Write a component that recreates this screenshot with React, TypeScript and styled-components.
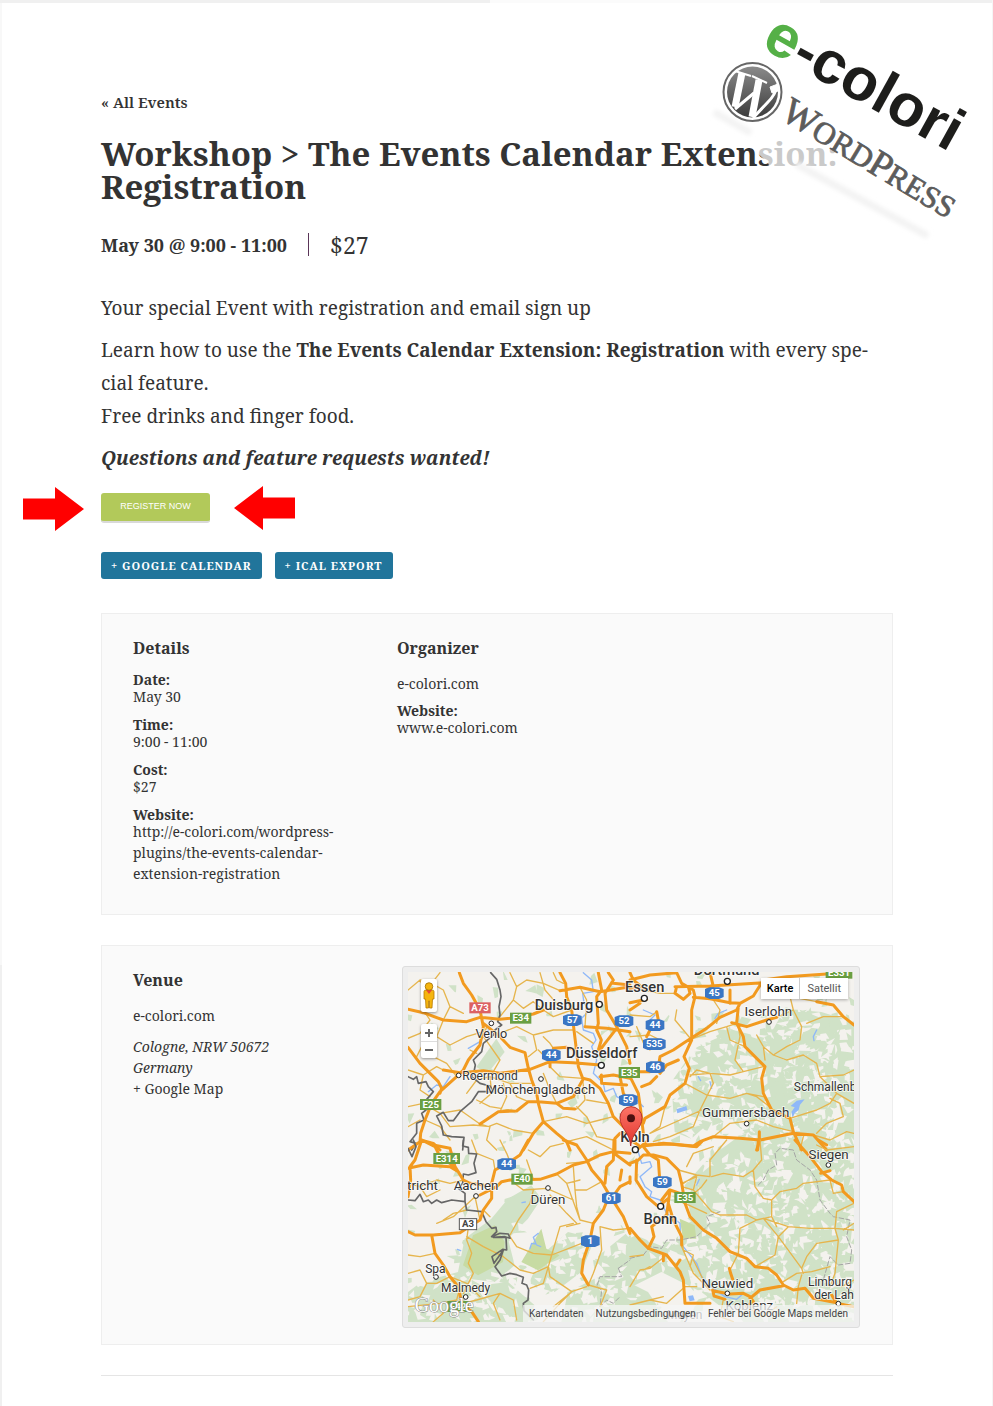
import React from "react";
import styled, { createGlobalStyle, css } from "styled-components";

const serif = `"Noto Serif", "Droid Serif", "DejaVu Serif Condensed", "DejaVu Serif", serif`;
const ink = "#333333";

const GlobalStyle = createGlobalStyle`
  *, *::before, *::after { box-sizing: border-box; }
  body { margin: 0; background: #ffffff; color: ${ink}; font-family: ${serif}; }
  a { color: inherit; text-decoration: none; }
  h1, h2, h3, p, dl, dd, address { margin: 0; }
`;

/* ---------- page frame ---------- */

const Page = styled.div`
  position: relative;
  min-height: 100vh;
  border-right: 1px solid #f5f5f5;
  background: linear-gradient(to bottom, #f8f8f8 965px, #f0f0f0 965px) 0 0 / 2px 100% no-repeat;
`;

const TopStrip = styled.div`
  height: 3px;
  background: linear-gradient(to right, #f0f0f0 490px, #fbfbfb 490px, #fbfbfb 820px, #f0f0f0 820px);
`;

const Content = styled.main`
  padding: 87px 99px 30px 101px;
`;

const Logos = styled.svg`
  position: absolute;
  top: 0;
  right: -1px;
  width: 303px;
  height: 250px;
  pointer-events: none;
`;

/* ---------- header ---------- */

const BackLink = styled.a`
  display: block;
  width: max-content;
  font-size: 15px;
  line-height: 24px;
  font-weight: 600;
`;

const Title = styled.h1`
  margin-top: 23px;
  font-size: 33px;
  line-height: 33px;
  font-weight: bold;
`;

const Schedule = styled.div`
  display: flex;
  align-items: center;
  margin-top: 25px;
  height: 34px;
`;

const When = styled.h2`
  font-size: 18px;
  line-height: 34px;
  font-weight: bold;
`;

const Divider = styled.span`
  width: 1px;
  height: 23px;
  margin: 0 21px 2px 21px;
  background: #5a3558;
`;

const Price = styled.span`
  font-size: 23px;
  line-height: 34px;
`;

/* ---------- description ---------- */

const Description = styled.div`
  margin-top: 30px;
  font-size: 19px;
  line-height: 33px;
  p + p { margin-top: 9px; }
`;

const Actions = styled.div`
  position: relative;
  margin-top: 18px;
`;

const RegisterButton = styled.button`
  display: block;
  width: 109px;
  height: 30px;
  padding: 0 0 2px;
  border: 0;
  border-bottom: 2px solid #d9d9d9;
  border-radius: 3px;
  background: #b2c95a;
  color: #ffffff;
  font: 9px/26px "Liberation Sans", Arial, sans-serif;
`;

const Arrow = styled.svg<{ $side: "left" | "right" }>`
  position: absolute;
  width: 61px;
  height: 44px;
  ${({ $side }) =>
    $side === "left"
      ? css`left: -78px; top: -6px;`
      : css`left: 133px; top: -7px; transform: scaleX(-1);`}
`;

const ExportRow = styled.div`
  display: flex;
  gap: 13px;
  margin-top: 29px;
`;

const ExportLink = styled.a`
  padding: 0 10px;
  border-radius: 3px;
  background: #21759b;
  color: #ffffff;
  font-size: 11px;
  line-height: 27px;
  font-weight: bold;
  letter-spacing: 1px;
  text-transform: uppercase;
`;

/* ---------- meta cards ---------- */

const Card = styled.section<{ $columns: string }>`
  display: grid;
  grid-template-columns: ${({ $columns }) => $columns};
  margin-top: 34px;
  padding: 20px 32px 20px 31px;
  border: 1px solid #eeeeee;
  background: #fafafa;
  & + & { margin-top: 30px; }
`;

const Group = styled.div`
  padding-right: 50px;
`;

const GroupTitle = styled.h3`
  margin-bottom: 11px;
  font-size: 16px;
  line-height: 28px;
  font-weight: bold;
`;

const List = styled.dl`
  padding-bottom: 10px;
  font-size: 14px;
  dt { font-weight: bold; line-height: 13px; }
  dd { line-height: 21px; }
  dd + dt { margin-top: 11px; }
`;

const Name = styled.p`
  margin: 10px 0;
  font-size: 14px;
  line-height: 21px;
`;

const Address = styled.address`
  font-size: 14px;
  line-height: 21px;
  a { font-style: normal; }
`;

const Rule = styled.hr`
  margin: 30px 0 0;
  border: 0;
  border-top: 1px solid #e5e5e5;
`;

/* ---------- map ---------- */

const MapFrame = styled.div`
  padding: 5px;
  margin-bottom: -4px;
  border: 1px solid #dddddd;
  border-radius: 3px;
  background: #eeeeee;
`;

const MapCanvas = styled.div`
  position: relative;
  overflow: hidden;
  aspect-ratio: 446 / 350;
  font-family: Roboto, Arial, sans-serif;
`;

const MapDrawing = styled.svg`
  display: block;
  width: 100%;
  height: 100%;
`;

const TypeSwitch = styled.div`
  position: absolute;
  top: 6px;
  right: 6px;
  display: flex;
  box-shadow: 0 1px 3px rgba(0, 0, 0, 0.3);
`;

const TypeButton = styled.button<{ $active?: boolean }>`
  height: 21px;
  padding: 0 ${({ $active }) => ($active ? 6 : 7)}px;
  border: 0;
  border-left: ${({ $active }) => ($active ? "0" : "1px solid #cccccc")};
  background: #ffffff;
  color: ${({ $active }) => ($active ? "#000000" : "#565656")};
  font: ${({ $active }) => ($active ? 500 : 400)} 11px/21px Roboto, Arial, sans-serif;
`;

const Controls = styled.div`
  position: absolute;
  top: 7px;
  left: 13px;
  display: grid;
  gap: 12px;
`;

const ControlBox = styled.div`
  display: grid;
  width: 16px;
  border-radius: 2px;
  background: #ffffff;
  box-shadow: 0 1px 3px rgba(0, 0, 0, 0.4);
`;

const ControlButton = styled.button<{ $tall?: boolean }>`
  display: grid;
  place-items: center;
  height: ${({ $tall }) => ($tall ? 33 : 17)}px;
  padding: 0;
  border: 0;
  background: transparent;
  & + & { border-top: 1px solid #dddddd; }
`;

const Attribution = styled.div`
  position: absolute;
  right: 0;
  bottom: 0;
  display: flex;
  gap: 12px;
  padding: 0 6px;
  background: rgba(245, 245, 245, 0.75);
  color: #444444;
  font-size: 10px;
  line-height: 17px;
  white-space: nowrap;
`;

/* Small irregular shards scattered over a rectangle, always the same for one seed. */
function scatter(seed: number, count: number, x: number, y: number, w: number, h: number, size: number) {
  let s = seed;
  const next = () => {
    s = (s * 16807) % 2147483647;
    return s / 2147483647;
  };
  let d = "";
  for (let i = 0; i < count; i++) {
    const cx = x + next() * w;
    const cy = y + next() * h;
    const pts = [0, 1, 2, 3].map((k) => {
      const angle = (k / 4) * Math.PI * 2 + next() * 1.4;
      const r = size * (0.2 + next() * 1.2);
      return `${Math.round(cx + Math.cos(angle) * r)} ${Math.round(cy + Math.sin(angle) * r)}`;
    });
    d += `M${pts.join("L")}Z`;
  }
  return d;
}

type Tile = {
  x: number;
  y: number;
  roads: string[];
  minor: string[];
  borders: string[];
  dashed?: string[];
  rivers: string[];
};

const tiles: Tile[] = [
  {
    x: -24,
    y: -36,
    roads: [
      "M24 148L70 158 130 180 200 185 240 172 300 178 330 175 400 162 430 150",
      "M178 38L190 70 215 105 240 150 250 200 240 255 205 300 190 330 170 350 120 395 95 430 75 480 62 520 60 545 24 570",
      "M62 540L100 550 120 570",
      "M250 190L300 230 330 262 375 278 385 325",
      "M24 262L60 310 115 365 125 385 120 400",
      "M130 330L180 338 250 332 300 340 390 328 450 305 520 308 600 315",
      "M385 325L395 360 410 400 415 430 430 485 400 520 370 570",
      "M240 492L295 455 350 453 385 425 415 425 470 430 520 410 548 360",
      "M470 430L490 445 525 447",
      "M430 485L470 520 500 545 510 570",
      "M480 38L497 70 500 110 515 150 522 210 528 260",
      "M480 92L540 82 600 95 690 80",
      "M528 260L535 320 548 355 570 360 600 385 625 430 640 470 690 520",
      "M595 38L605 90 590 110 595 190 590 210 604 240 595 270",
      "M625 38L640 60 615 100 620 150 650 200 680 260 690 310",
      "M555 200L620 205 690 215M650 205L615 250 600 270M640 70L690 75",
      "M600 350L640 345 690 355M604 345L605 370 680 375M660 350L670 400 690 430",
      "M690 520L660 520 645 535 645 570M460 265L500 262 530 270",
      "M450 305L450 320",
    ],
    minor: [
      "M24 90L60 60 95 70 120 38M60 60L80 100 70 150 90 180 60 220 24 235M95 70L130 90 150 140 190 160",
      "M130 180L110 230 70 250 50 290M110 230L150 255 200 230 250 215M150 140L130 180",
      "M300 170L340 120 350 80 380 60 430 70 480 92M340 120L370 145 400 125 430 150M350 80L330 38",
      "M300 220L350 200 400 225 460 210 522 210M400 225L410 270 385 290M430 150L460 170 515 150",
      "M200 400L230 360 270 350 330 370 395 370M230 420L270 440 350 453M270 350L275 400 240 430",
      "M330 370L350 410 385 425M450 320L480 350 548 355M430 340L450 390 470 430M415 270L450 305",
      "M24 440L70 430 120 460 180 450 240 492M120 460L150 500 220 495 270 500 260 540 290 570",
      "M240 492L265 500 290 490 340 510 400 520M430 485L500 470 560 490 600 480 640 470M300 455L320 410 310 370",
      "M530 440L560 470 590 530 640 540M500 545L560 530 600 550 640 570M560 420L620 430M548 360L555 420 530 447",
      "M24 330L70 345 110 320 130 330M70 345L60 390 90 410M540 82L560 120 555 200M420 38L435 90 470 130",
      "M100 290L140 310 170 350M210 270L230 280M530 215L580 250M260 200L250 230 265 250 300 300 280 335",
      "M430 230L450 250 460 265M24 500L60 480M75 480L120 500 150 540M460 38L470 60 490 70",
    ],
    borders: [
      "M272 38L290 58 300 90 303 110 297 140 300 165 293 185 305 195 285 210 280 225 250 250 245 275 220 300 226 315 222 335 215 350 240 370 270 378 280 395 235 395 215 425 180 455 160 482 145 482 130 457 110 468 125 498 130 525 155 530 192 532 188 570",
      "M24 350L40 358 50 350 55 370 78 365 85 380 100 395 70 430 78 450 65 460 72 480 50 490 50 520 30 545 48 550 35 570",
    ],
    rivers: [
      "M550 38L575 60 580 95 548 100 552 130 570 150 545 175 550 210 580 220 588 240 575 260 590 300 580 340 610 370 615 395 640 385 650 410 680 425",
      "M85 395L110 375 130 380 150 350M205 265L240 245 265 210",
    ],
  },
  {
    x: 666,
    y: -36,
    roads: [
      "M0 60L60 45 140 38 155 70 190 90 195 110 185 150 185 240 162 290 178 325 165 370 120 405 105 440 45 475",
      "M0 128L50 118M0 85L30 80M0 38L10 60 45 90M0 150L30 130",
      "M140 80L135 100 160 118 180 100 175 80M135 80L240 78 400 68",
      "M190 112L240 116 300 128 330 130 370 108 400 60 470 50 590 42",
      "M330 130L320 150 270 172 230 205 160 250 130 270 90 290 85 320",
      "M325 140L320 190 340 230 345 260 380 295 405 320 395 355 400 400 425 450 480 475 490 515 515 570",
      "M305 188L350 200 410 180 440 172M80 155L85 180 60 210 50 230",
      "M560 125L610 135 640 170 672 195",
      "M0 350L30 335 60 335 90 305M90 340L110 315 145 300M35 380L60 370 80 350",
      "M0 350L25 400 32 450 40 520M45 475L40 490",
      "M45 557L100 550 190 558 210 545 250 530 330 535 390 540 490 520 550 525 590 570",
      "M388 515L388 545 380 570M240 38L250 80 230 90M300 90L300 130",
    ],
    minor: [
      "M140 150L135 180 185 240M100 245L60 225 0 230M0 165L60 170 80 155M20 200L45 260 60 270",
      "M190 235L240 215 290 200 320 190M325 200L330 230 315 300 340 335 400 320",
      "M340 335L300 345 240 340 180 345M240 340L200 330 180 350M165 370L230 405 300 415 350 400 400 410",
      "M240 340L250 370 210 450 190 500 120 530 70 545M60 520L150 480 215 450",
      "M440 172L490 150 515 200 510 240 470 260 430 285 400 260 380 225M490 150L480 110 560 125",
      "M400 260L405 300M430 285L470 300 520 285 560 310 570 350 620 400 600 430 560 450 480 475",
      "M570 350L640 345 672 330M620 400L672 430M600 415L630 430 640 470 590 490 560 520",
      "M425 445L380 410 350 400M490 515L430 500 380 480 300 490 250 530M290 200L300 240 345 260",
      "M550 525L600 540 650 515 672 520M470 50L480 90M250 120L270 150 260 190M40 90L90 100 135 100",
      "M0 430L20 480 0 500M60 520L90 500 105 440M530 190L580 170 640 170M510 570L520 530",
    ],
    borders: [],
    rivers: [
      "M40 150L75 165 60 180M560 210L550 230 552 242M205 350L212 362M255 175L265 160 290 150M240 365L245 385M20 420L40 440",
    ],
  },
  {
    x: -24,
    y: 504,
    roads: [
      "M65 0L45 60 30 80 32 120 24 170M24 85L70 75 150 80 175 95",
      "M65 0L105 20 120 50 165 80 190 120M100 15L150 25 165 80M190 120L210 130 250 135",
      "M24 275L45 285 100 285 180 278 205 262 240 240 250 210 275 175 275 130 285 90 330 65 360 45 385 0",
      "M240 165L290 140 305 125 330 120 420 118 470 102 520 75 560 65 600 45 640 35 690 40",
      "M95 285L105 340 130 375 150 410 175 440 185 490 215 515 235 545",
      "M490 0L530 15 560 60 575 90 605 125 628 165 610 210 580 250 570 300 550 360 545 400 565 435",
      "M615 130L620 80 640 60 642 0M660 120L665 90M635 175L660 140 690 125M635 175L670 230 690 280M642 40L690 75",
    ],
    minor: [
      "M215 0L230 40 280 60 285 90M300 0L320 40 330 65M385 30L420 50 450 20 490 10M400 118L380 60M520 80L525 150 530 200 540 240 580 250",
      "M330 120L370 150 440 145 520 180M450 165L500 220 530 250M470 102L500 130 540 240M560 65L500 70M605 125L560 150 525 150",
      "M24 130L60 140 110 120 150 130 190 120M60 140L80 170 120 150M130 240L160 220 200 210M110 250L160 230 225 170",
      "M240 240L225 170M205 262L200 300 215 340 205 370 220 400 205 430 190 460M200 290L250 320 310 350 360 390 400 400 445 380 455 345 480 260 520 250",
      "M330 290L350 320 400 340 455 345M250 210L270 230M330 285L355 240 390 190 400 150M455 345L520 320 570 300M445 380L450 410 515 455 560 440",
      "M445 380L430 430 390 445M515 455L480 490 430 545M24 345L60 350 105 340M24 400L60 390 80 430 60 470 24 480M80 430L110 430 150 410",
      "M190 490L230 480 300 460 340 480 350 540M100 480L130 520 100 545M150 410L200 430 240 470M600 260L640 270 690 265M600 260L605 330 580 400 565 435",
      "M500 260L540 250M300 540L280 490 300 460M565 435L620 450 600 500M460 500L515 455M180 440L170 480 120 490 24 500M540 120L500 130",
    ],
    borders: [
      "M190 0L188 18 205 22 206 40 230 42 222 70 228 98 205 105 190 102 188 130 175 145 195 160 195 185 200 210 245 215 258 245 275 265 288 262 290 275 275 290 300 280 325 282 330 295 315 290 280 292 318 292 320 330 308 328 276 350 282 370 310 330 300 360 285 380 305 408 330 400 350 404 370 412 366 430 380 435 386 450 384 480 370 490 372 512 400 540",
      "M24 180L45 182 60 163 70 185 85 180 95 190 110 180 125 188 155 180 195 185M24 25L36 50 48 20 40 0",
    ],
    dashed: ["M655 385L690 360M655 385L665 410 600 410 590 440 605 450 600 500 620 480 640 490 660 470"],
    rivers: ["M390 325L395 310 408 312 400 292 415 280M410 315L422 320M366 188L376 186M172 328L182 332"],
  },
  {
    x: 666,
    y: 504,
    roads: [
      "M0 70L25 60 40 45 70 45 110 55 145 90 155 130 165 190 180 230 220 270 260 295 300 335 350 355 375 380 415 385 440 405 460 435 490 450 525 445 550 475 620 488",
      "M40 20L60 45 85 60 90 130M20 60L18 120 50 170 85 200M0 265L30 300 55 325 110 345 150 395 160 420 165 490M100 345L100 362M150 360L140 375",
      "M55 325L72 290 65 260 110 225 120 150 150 160M85 200L115 175M115 190L130 240 155 290 155 315M118 150L95 180",
      "M45 15L120 12 200 20 215 5M385 0L383 30M20 30L50 5",
      "M495 0L540 50 575 95 605 120 635 135 640 155 672 185M565 0L590 15M572 100L600 92",
      "M248 450L252 468 285 478M248 452L300 462 340 460 360 470 370 485 350 500M360 475L390 450 460 437M298 385L302 400 308 418M170 490L240 490",
      "M605 465L620 490 672 500M0 0L25 15M0 130L0 110",
    ],
    minor: [
      "M145 90L200 105 240 110 240 60 290 0M200 105L160 130M155 130L200 110 190 150 155 140M190 150L215 180 245 215 270 225",
      "M245 110L280 100 340 110 370 90 395 60 390 0M370 90L375 140 400 175 425 180 450 155 500 145 520 130 600 120",
      "M230 120L215 140 160 190M270 225L350 225 380 240 425 230 425 180M380 240L330 265 325 340M380 240L400 235 445 290 435 345 375 380",
      "M400 235L475 260 540 265 615 265 672 270M445 290L515 385M475 260L445 290M615 265L620 215 672 190M615 265L625 300 615 400 600 440",
      "M515 385L530 350 560 310 625 300M460 425L500 400 545 395 600 380M515 385L520 400M250 20L190 40 170 80M425 230L440 260",
      "M155 290L160 330 190 345 180 380M155 320L190 400 240 450M0 350L40 345M110 345L60 385 30 390 0 440M40 390L60 380",
      "M60 480L110 490 165 440 200 440M0 495L60 480 100 470M190 360L220 420M325 340L300 390M280 478L270 530 310 545M350 500L400 530 440 500M500 490L505 440 515 405",
      "M635 440L672 420M672 250L640 270M640 155L610 160 600 120M560 15L590 30 672 20M165 190L230 220",
    ],
    borders: [],
    dashed: [
      "M385 135L400 120 415 90 440 75 435 40 450 25 490 30 500 60 540 90 560 120 570 180 600 220 610 230 660 240 650 290 665 330 660 370 625 375 600 350 580 420 575 440",
      "M0 355L40 345 60 320 95 325 110 300 150 300 200 290 240 250 230 230 270 215",
    ],
    rivers: [
      "M20 20L35 70 60 65 65 80 30 110 45 140 65 155 60 170 90 180 110 220 150 250 152 310 200 370 215 410 250 445 285 470 320 478 335 465M200 135L208 118",
    ],
  },
];

type Place = { name: string; x: number; y: number; size: number; dot?: [number, number] };

const places: Place[] = [
  { name: "Duisburg", x: 468, y: 114, size: 44, dot: [574, 97] },
  { name: "Essen", x: 710, y: 59, size: 44, dot: [709, 79] },
  { name: "Dortmund", x: 956, y: 10, size: 44, dot: [958, 28] },
  { name: "Iserlohn", x: 1081, y: 132, size: 40, dot: [1083, 150] },
  { name: "Venlo", x: 250, y: 199, size: 38, dot: [250, 154] },
  { name: "Düsseldorf", x: 581, y: 258, size: 44, dot: [580, 280] },
  { name: "Roermond", x: 246, y: 324, size: 36, dot: [152, 310] },
  { name: "Mönchengladbach", x: 397, y: 367, size: 40, dot: [399, 321] },
  { name: "Schmallenberg", x: 1277, y: 358, size: 36 },
  { name: "Gummersbach", x: 1013, y: 436, size: 40, dot: [1016, 455] },
  { name: "Köln", x: 681, y: 509, size: 44, dot: [682, 533] },
  { name: "Siegen", x: 1262, y: 560, size: 40, dot: [1261, 579] },
  { name: "Maastricht", x: -6, y: 653, size: 40 },
  { name: "Aachen", x: 204, y: 653, size: 40, dot: [204, 672] },
  { name: "Düren", x: 420, y: 696, size: 40, dot: [420, 648] },
  { name: "Bonn", x: 757, y: 756, size: 44, dot: [758, 703] },
  { name: "Spa", x: 82, y: 903, size: 36, dot: [84, 915] },
  { name: "Malmedy", x: 173, y: 960, size: 36, dot: [173, 975] },
  { name: "Neuwied", x: 958, y: 948, size: 40, dot: [958, 964] },
  { name: "Koblenz", x: 1024, y: 1014, size: 40 },
  { name: "Mayen", x: 830, y: 1042, size: 36 },
  { name: "Limburg an", x: 1290, y: 942, size: 36 },
  { name: "der Lahn", x: 1288, y: 980, size: 36, dot: [1291, 995] },
];

type Shield = { label: string; x: number; y: number; kind: "blue" | "green" | "red" | "white" };

const shields: Shield[] = [
  { label: "A73", x: 216, y: 107, kind: "red" },
  { label: "E34", x: 338, y: 138, kind: "green" },
  { label: "57", x: 493, y: 144, kind: "blue" },
  { label: "52", x: 648, y: 147, kind: "blue" },
  { label: "45", x: 919, y: 63, kind: "blue" },
  { label: "44", x: 741, y: 159, kind: "blue" },
  { label: "535", x: 739, y: 216, kind: "blue" },
  { label: "46", x: 742, y: 285, kind: "blue" },
  { label: "44", x: 430, y: 249, kind: "blue" },
  { label: "E35", x: 664, y: 301, kind: "green" },
  { label: "59", x: 661, y: 384, kind: "blue" },
  { label: "E25", x: 68, y: 397, kind: "green" },
  { label: "E314", x: 116, y: 559, kind: "green" },
  { label: "44", x: 296, y: 576, kind: "blue" },
  { label: "E40", x: 342, y: 621, kind: "green" },
  { label: "61", x: 610, y: 678, kind: "blue" },
  { label: "59", x: 763, y: 630, kind: "blue" },
  { label: "E35", x: 831, y: 676, kind: "green" },
  { label: "A3", x: 180, y: 756, kind: "white" },
  { label: "1", x: 547, y: 807, kind: "blue" },
  { label: "E331", x: 1293, y: 3, kind: "green" },
  { label: "E42", x: 150, y: 1003, kind: "green" },
];

const shieldFill = { blue: "#3a76c4", green: "#6a9f42", red: "#dc6163", white: "#ffffff" };

function ShieldMark({ label, x, y, kind }: Shield) {
  const half = label.length > 3 ? 40 : kind === "blue" ? (label.length > 2 ? 34 : 28) : label.length > 2 ? 32 : 26;
  return (
    <g transform={`translate(${x} ${y})`}>
      {kind === "blue" ? (
        <path
          d={`M${-half} -12L${-half + 14} -17H${half - 14}L${half} -12V12L${half - 14} 18H${-half + 14}L${-half} 12Z`}
          fill={shieldFill.blue}
        />
      ) : (
        <rect x={-half} y={-16} width={half * 2} height={33} fill={shieldFill[kind]} stroke={kind === "white" ? "#555" : "none"} strokeWidth="3" />
      )}
      <text textAnchor="middle" y="10" fontSize="29" fontWeight="bold" fill={kind === "white" ? "#444" : "#fff"}>
        {label}
      </text>
    </g>
  );
}

const woods =
  "M790 330L860 230 960 170 1080 200 1130 110 1240 120 1338 150V1050H1000L880 960 760 900 640 960 560 860 660 780 780 830 850 740 830 640 900 560 1010 480 940 420 850 500 800 480Z" +
  "M370 640L400 680 360 740 300 800 320 880 260 930 180 920 150 900 170 800 250 740 300 680Z" +
  "M40 930L150 900 220 940 300 930 380 1000 360 1050H0V960Z" +
  "M205 285L265 200 290 240 250 290 280 310 230 300Z" +
  "M400 850L480 780 560 800 520 900 440 960 360 940Z" +
  "M480 960L600 900 720 960 780 1050H460Z";

function MapArt() {
  return (
    <MapDrawing viewBox="0 0 1338 1050" preserveAspectRatio="xMidYMid slice" role="img" aria-label="Map of Cologne">
      <rect width="1338" height="1050" fill="#f4f2ee" />
      <path d={woods} fill="#d0e2c7" />
      <path d={scatter(91, 190, 0, 0, 1338, 1050, 17)} fill="#d0e2c7" />
      <path d={scatter(17, 760, 780, 110, 560, 940, 17)} fill="#f4f2ee" />
      <path d={scatter(53, 160, 300, 740, 480, 310, 15)} fill="#f4f2ee" />
      <path d={scatter(29, 60, 0, 900, 320, 150, 15)} fill="#f4f2ee" />
      <path d={scatter(71, 320, 860, 120, 470, 900, 20)} fill="#d0e2c7" />
      <path d="M195 790L260 760 290 810 285 870 210 910 165 880ZM340 870L400 770 415 830 455 850 390 895ZM815 740L860 760 865 800 825 800Z" fill="#c7dba3" />
      <path d="M1148 402L1166 386 1190 382 1176 398 1172 414 1160 424 1154 438 1150 420 1160 406ZM805 412L835 402 838 414 808 424ZM840 972L855 970 860 985 845 988Z" fill="#8fb8f8" />
      {tiles.map((tile, i) => (
        <g key={i} transform={`translate(${tile.x} ${tile.y})`} fill="none" strokeLinejoin="round" strokeLinecap="round">
          <path d={tile.rivers.join("")} stroke="#8fb8f8" strokeWidth="4" />
          {tile.dashed && <path d={tile.dashed.join("")} stroke="#a5a5a5" strokeWidth="3" strokeDasharray="14 7" />}
          <path d={tile.minor.join("")} stroke="#e6b54d" strokeWidth="4" />
          {tile.borders.length > 0 && <path d={tile.borders.join("")} stroke="#666666" strokeWidth="5" />}
          <path d={tile.roads.join("")} stroke="#f29a1f" strokeWidth="9" />
        </g>
      ))}
      {shields.map((shield, i) => (
        <ShieldMark key={i} {...shield} />
      ))}
      {places.map(({ name, x, y, size, dot }) => (
        <g key={name}>
          {dot && <circle cx={dot[0]} cy={dot[1]} r={size > 40 ? 9 : 7} fill="#fff" stroke="#222" strokeWidth={size > 40 ? 4 : 3} />}
          <text
            x={x}
            y={y}
            textAnchor="middle"
            fontSize={size}
            fontWeight={size > 40 ? 500 : 400}
            fill="#333"
            stroke="#fff"
            strokeWidth="5"
            strokeOpacity="0.8"
            paintOrder="stroke"
          >
            {name}
          </text>
        </g>
      ))}
      <defs>
        <linearGradient id="pin" x1="0" y1="0" x2="0" y2="1">
          <stop offset="0" stopColor="#fd7567" />
          <stop offset="1" stopColor="#e0332c" />
        </linearGradient>
      </defs>
      <path d="M668 522C666 480 636 470 636 437A33 33 0 0 1 702 437C702 470 672 480 668 522Z" fill="url(#pin)" stroke="#b8322b" strokeWidth="3" />
      <circle cx="669" cy="439" r="12" fill="#4c1010" />
      <text x="20" y="1020" fontFamily="Liberation Serif, serif" fontSize="60" fill="#fff" stroke="#8a8a8a" strokeWidth="3" paintOrder="stroke">
        Google
      </text>
    </MapDrawing>
  );
}

function Pegman() {
  return (
    <svg width="14" height="28" viewBox="0 0 14 28" aria-hidden="true">
      <path d="M2 9.500Q2 8 4 8H10Q12 8 12 9.500V17H10.500L10 26H7.500V19H6.500V26H4L3.500 17H2Z" fill="#f5b50f" stroke="#b87a00" strokeWidth="0.800" />
      <path d="M4 8H10L7 12Z" fill="#e8453c" />
      <circle cx="7" cy="4.500" r="3.800" fill="#f5b50f" stroke="#a06c00" strokeWidth="0.800" />
    </svg>
  );
}

function EventMap() {
  return (
    <MapFrame>
      <MapCanvas>
        <MapArt />
        <Controls>
          <ControlBox>
            <ControlButton $tall aria-label="Street View">
              <Pegman />
            </ControlButton>
          </ControlBox>
          <ControlBox>
            <ControlButton aria-label="Zoom in">
              <svg width="8" height="8" viewBox="0 0 8 8"><path d="M4 0V8M0 4H8" stroke="#666" strokeWidth="2" /></svg>
            </ControlButton>
            <ControlButton aria-label="Zoom out">
              <svg width="8" height="8" viewBox="0 0 8 8"><path d="M0 4H8" stroke="#666" strokeWidth="2" /></svg>
            </ControlButton>
          </ControlBox>
        </Controls>
        <TypeSwitch>
          <TypeButton $active>Karte</TypeButton>
          <TypeButton>Satellit</TypeButton>
        </TypeSwitch>
        <Attribution>
          <a href="#kartendaten">Kartendaten</a>
          <a href="#nutzung">Nutzungsbedingungen</a>
          <a href="#fehler">Fehler bei Google Maps melden</a>
        </Attribution>
      </MapCanvas>
    </MapFrame>
  );
}

function BrandLogos() {
  return (
    <Logos viewBox="690 0 303 250" aria-label="e-colori WordPress">
      <defs>
        <linearGradient id="steel" x1="0" y1="0" x2="0" y2="1">
          <stop offset="0" stopColor="#8a8a8a" />
          <stop offset="1" stopColor="#3c3c3c" />
        </linearGradient>
        <filter id="soft" x="-20%" y="-20%" width="140%" height="140%">
          <feGaussianBlur stdDeviation="2" />
        </filter>
      </defs>
      <path d="M742 134L750 146 768 163 772 172 850 172 850 134Z" fill="#fff" opacity="0.74" />
      <path d="M714 112L751 133M796 164L928 236" stroke="#f3f3f3" strokeWidth="7" filter="url(#soft)" />
      <text transform="translate(760 47) rotate(29)" fontFamily="Liberation Sans, Arial, sans-serif" fontWeight="bold" fontSize="60" fill="#1d1d1b">
        <tspan fill="#55b047">e</tspan>-colori
      </text>
      <circle cx="752.500" cy="92" r="29" fill="#fff" stroke="#666" strokeWidth="2" />
      <circle cx="752.500" cy="92" r="25.500" fill="url(#steel)" />
      <g fill="none" stroke="#fff">
        <path d="M742 73L735 107" strokeWidth="7" />
        <path d="M759 80L752 117" strokeWidth="7" />
        <path d="M735 109L754 93M753 118L768 102Q775 95 777 87" strokeWidth="3" />
        <path d="M735 71L751 76M752 76L767 83" strokeWidth="2" />
        <path d="M770 87L778 84V91L772 93Z" fill="#fff" strokeWidth="1" />
      </g>
      <text transform="translate(779 118) rotate(31)" fontFamily="Liberation Serif, serif" fontSize="38" fill="#5c5c5c" stroke="#5c5c5c" strokeWidth="0.800">
        W<tspan fontSize="31">ORD</tspan>P<tspan fontSize="31">RESS</tspan>
      </text>
    </Logos>
  );
}

function PointerArrow({ side }: { side: "left" | "right" }) {
  return (
    <Arrow $side={side} viewBox="0 0 61 44" aria-hidden="true">
      <path d="M0 11.500H32V0L61 22 32 44V32.500H0Z" fill="#ff0000" />
    </Arrow>
  );
}

export default function App() {
  return (
    <>
      <GlobalStyle />
      <Page>
        <TopStrip />
        <Content>
          <BackLink href="#events">« All Events</BackLink>
          <Title>Workshop &gt; The Events Calendar Extension: Registration</Title>
          <Schedule>
            <When>May 30 @ 9:00 - 11:00</When>
            <Divider />
            <Price>$27</Price>
          </Schedule>
          <Description>
            <p>Your special Event with registration and email sign up</p>
            <p>
              Learn how to use the <strong>The Events Calendar Extension: Registration</strong> with every spe&shy;cial
              feature.
              <br />
              Free drinks and finger food.
            </p>
            <p>
              <strong>
                <em>Questions and feature requests wanted!</em>
              </strong>
            </p>
          </Description>
          <Actions>
            <PointerArrow side="left" />
            <RegisterButton>REGISTER NOW</RegisterButton>
            <PointerArrow side="right" />
          </Actions>
          <ExportRow>
            <ExportLink href="#google">+ Google Calendar</ExportLink>
            <ExportLink href="#ical">+ iCal Export</ExportLink>
          </ExportRow>
          <Card $columns="264px 264px 1fr">
            <Group>
              <GroupTitle>Details</GroupTitle>
              <List>
                <dt>Date:</dt>
                <dd>May 30</dd>
                <dt>Time:</dt>
                <dd>9:00 - 11:00</dd>
                <dt>Cost:</dt>
                <dd>$27</dd>
                <dt>Website:</dt>
                <dd>
                  <a href="#plugin">http://e-colori.com/wordpress-plugins/the-events-calendar-extension-registration</a>
                </dd>
              </List>
            </Group>
            <Group>
              <GroupTitle>Organizer</GroupTitle>
              <Name>e-colori.com</Name>
              <List>
                <dt>Website:</dt>
                <dd>
                  <a href="#site">www.e-colori.com</a>
                </dd>
              </List>
            </Group>
          </Card>
          <Card $columns="269px 1fr">
            <Group>
              <GroupTitle>Venue</GroupTitle>
              <Name>e-colori.com</Name>
              <Address>
                Cologne, NRW 50672
                <br />
                Germany
                <br />
                <a href="#map">+ Google Map</a>
              </Address>
            </Group>
            <EventMap />
          </Card>
          <Rule />
        </Content>
        <BrandLogos />
      </Page>
    </>
  );
}
